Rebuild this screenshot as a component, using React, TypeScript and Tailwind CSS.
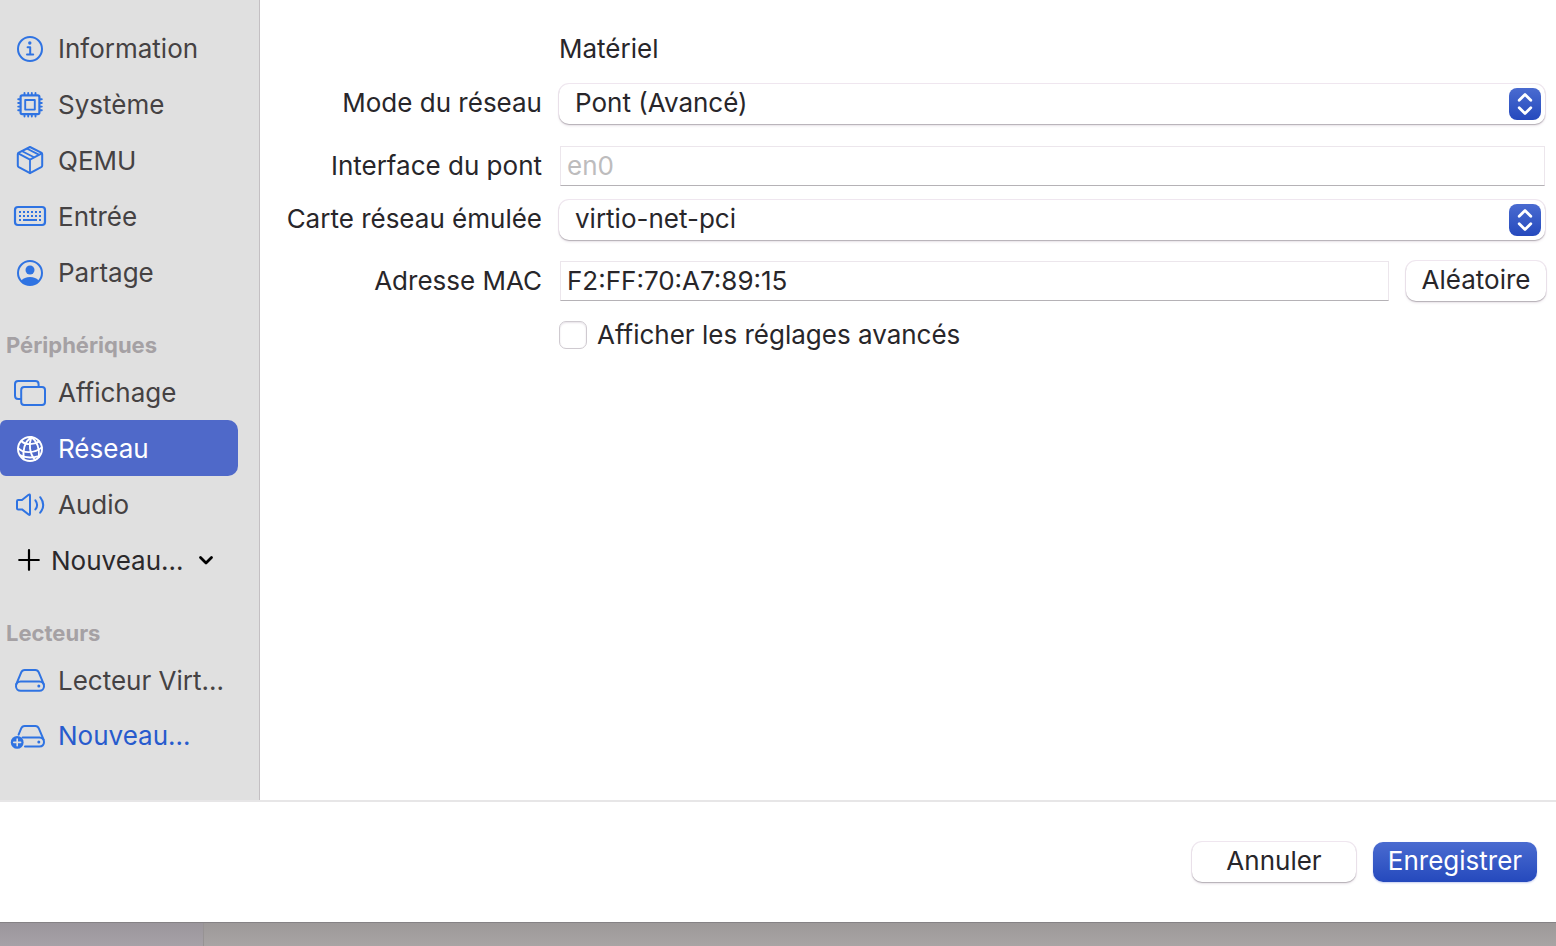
import { useState } from 'react';
import type { ReactNode } from 'react';

interface IconProps {
  children: ReactNode;
}

function Icon({ children }: IconProps) {
  return (
    <svg
      viewBox="0 0 32 32"
      className="w-8 h-8 flex-shrink-0 overflow-visible"
      fill="none"
      stroke="currentColor"
      strokeWidth="2"
      strokeLinecap="round"
      strokeLinejoin="round"
      aria-hidden="true"
    >
      {children}
    </svg>
  );
}

const InfoIcon = () => (
  <Icon>
    <circle cx="16" cy="17" r="12" />
    <circle cx="15.8" cy="11" r="1.7" fill="currentColor" stroke="none" />
    <path d="M13.6 15.2h2.6v7.2M13 22.6h6.2" />
  </Icon>
);

const ChipIcon = () => (
  <Icon>
    <rect x="6.6" y="7.4" width="18.8" height="18.8" rx="1.6" strokeWidth="2.2" />
    <rect x="11.2" y="12" width="9.6" height="9.6" strokeWidth="1.9" />
    <path
      d="M10.5 7V5M14.2 7V5M17.8 7V5M21.5 7V5M10.5 26.6v2M14.2 26.6v2M17.8 26.6v2M21.5 26.6v2M6.2 11.3h-2M6.2 15h-2M6.2 18.6h-2M6.2 22.3h-2M25.8 11.3h2M25.8 15h2M25.8 18.6h2M25.8 22.3h2"
      strokeWidth="1.9"
    />
  </Icon>
);

const BoxIcon = () => (
  <Icon>
    <path d="M16 3 27.2 8.6Q28.2 9.2 28.2 10.2V21.4Q28.2 22.6 27.2 23.2L16 29.2 4.8 23.2Q3.8 22.6 3.8 21.4V10.2Q3.8 9.2 4.8 8.6Z" />
    <path d="M4.2 9.4 16 15.6 27.8 9.4M16 15.6V29M8.2 7.2 20 13.2M13.2 4.8 24.8 10.6" strokeWidth="1.8" />
  </Icon>
);

const KeyboardIcon = () => (
  <Icon>
    <rect x="1" y="7" width="30" height="18" rx="3" strokeWidth="2.2" />
    <path d="M5 12h22M5 16h22" strokeDasharray="2 2" strokeLinecap="butt" />
    <path d="M5 20h2M9 20h14M25 20h2" strokeLinecap="butt" />
  </Icon>
);

const PersonIcon = () => (
  <Icon>
    <circle cx="16" cy="17" r="12" />
    <circle cx="16" cy="14" r="4.5" fill="currentColor" stroke="none" />
    <path d="M7.2 25C9 22 12.4 21 16 21s7 1 8.8 4C22.4 27.8 19.4 29 16 29s-6.4-1.2-8.8-4Z" fill="currentColor" stroke="none" />
  </Icon>
);

const WindowsIcon = () => (
  <Icon>
    <path d="M6.4 23H4.2Q1 23 1 19.8V8.2Q1 5 4.2 5H21.4Q24.6 5 24.6 8.2V10" />
    <rect x="7.2" y="11" width="23.8" height="18" rx="3" />
  </Icon>
);

const NetworkIcon = () => (
  <Icon>
    <g strokeWidth="1.9">
      <circle cx="16" cy="17" r="12" />
      <path d="M17 5C11.5 9.5 8.4 17 9.6 27.2M17.4 5C14.6 12 15.4 21.5 21 28M17.4 5C22.6 9 25.6 15 25 25" />
      <path d="M7.4 9.2C12 13.2 20 13 25.4 9.4M4.2 16.2C9 21.6 20.5 21.6 27.8 15.4M5.8 23.2C11 25.8 18.5 26 25 24.2" />
    </g>
  </Icon>
);

const SpeakerIcon = () => (
  <Icon>
    <path d="M3 13.2Q3 12 4.2 12H8L14.6 6.8Q16 5.8 16 7.4V26Q16 27.6 14.6 26.5L8 21.4H4.2Q3 21.4 3 20.2Z" />
    <path d="M21.4 12.3Q24.8 17 21.4 21.4M26.2 9.2Q32.2 17 26.2 24.6" />
  </Icon>
);

const DriveIcon = () => (
  <Icon>
    <path d="M2.2 20.3 7.2 8.4Q8.2 6 10.6 6H21.4Q23.8 6 24.8 8.4L29.8 20.3" />
    <rect x="2" y="17.4" width="28" height="9.4" rx="4.6" />
    <circle cx="24.8" cy="22" r="1.5" fill="currentColor" stroke="none" />
  </Icon>
);

const DriveAddIcon = () => (
  <Icon>
    <path d="M4.6 14.6 7.2 8.4Q8.2 6 10.6 6H21.4Q23.8 6 24.8 8.4L29.6 19.6" />
    <path d="M8.6 17.4H25.4Q30 17.6 30 22T25.4 26.6H11" />
    <circle cx="24.8" cy="22" r="1.5" fill="currentColor" stroke="none" />
    <circle cx="3.2" cy="22.4" r="6.4" fill="currentColor" stroke="none" />
    <path d="M-.2 22.4h6.8M3.2 19v6.8" stroke="#e0e0e0" strokeWidth="1.6" />
  </Icon>
);

interface NavItem {
  id: string;
  label: string;
  icon: ReactNode;
}

const GENERAL: NavItem[] = [
  { id: 'info',    label: 'Information', icon: <InfoIcon /> },
  { id: 'system',  label: 'Système',     icon: <ChipIcon /> },
  { id: 'qemu',    label: 'QEMU',        icon: <BoxIcon /> },
  { id: 'input',   label: 'Entrée',      icon: <KeyboardIcon /> },
  { id: 'sharing', label: 'Partage',     icon: <PersonIcon /> },
];

const DEVICES: NavItem[] = [
  { id: 'display', label: 'Affichage', icon: <WindowsIcon /> },
  { id: 'network', label: 'Réseau',    icon: <NetworkIcon /> },
  { id: 'sound',   label: 'Audio',     icon: <SpeakerIcon /> },
];

const DRIVES: NavItem[] = [
  { id: 'drive0', label: 'Lecteur Virt...', icon: <DriveIcon /> },
];

interface NavListProps {
  items: NavItem[];
  active: string;
  onSelect: (id: string) => void;
}

function NavList({ items, active, onSelect }: NavListProps) {
  return (
    <>
      {items.map((item) => (
        <button
          key={item.id}
          onClick={() => onSelect(item.id)}
          className={
            item.id === active
              ? 'flex h-14 w-full items-center gap-3 rounded-l-md rounded-r-[10px] bg-[#4f69c9] pl-3.5 text-white'
              : 'flex h-14 w-full items-center gap-3 pl-3.5 text-[#454243]'
          }
        >
          <span className={item.id === active ? 'text-white' : 'text-[#2f73e2]'}>{item.icon}</span>
          <span className="whitespace-nowrap pt-0.5">{item.label}</span>
        </button>
      ))}
    </>
  );
}

interface PopupSelectProps {
  id: string;
  options: string[];
}

function PopupSelect({ id, options }: PopupSelectProps) {
  return (
    <div className="relative px-px">
      <select
        id={id}
        className="block h-10 w-full appearance-none rounded-[10px] bg-white pb-0.5 pl-4 pr-12
                   shadow-[0_1px_1px_0_#b4b0b5,0_0_0_1px_#efe6ef,0_2px_3px_0_#ece8ec] outline-none"
      >
        {options.map((o) => (
          <option key={o}>{o}</option>
        ))}
      </select>
      <span
        className="pointer-events-none absolute right-[5px] top-1 flex h-8 w-8 items-center justify-center
                   rounded-lg bg-linear-to-b from-[#4a6bd0] to-[#2549bd] text-white"
      >
        <svg viewBox="0 0 32 32" className="h-8 w-8" fill="none" stroke="currentColor" strokeWidth="2.8" strokeLinecap="round" strokeLinejoin="round" aria-hidden="true">
          <path d="m10.2 12.2 5.8-5.7 5.8 5.7M10.2 19.8l5.8 5.7 5.8-5.7" />
        </svg>
      </span>
    </div>
  );
}

const INPUT =
  'block h-10 min-w-0 flex-1 border border-[#ece6ec] border-b-[#b5b2b6] bg-white px-1.5 pb-0.5 outline-none placeholder:text-[#bdbcbd]';

const BUTTON =
  'h-10 rounded-[10px] bg-white pb-0.5 text-center shadow-[0_1px_1px_0_#b4b0b5,0_0_0_1px_#efe6ef,0_2px_3px_0_#ece8ec]';

export default function App() {
  const [active, setActive] = useState('network');
  const [mac, setMac] = useState('F2:FF:70:A7:89:15');
  const [advanced, setAdvanced] = useState(false);

  const randomize = () => {
    const bytes = Array.from({ length: 6 }, () => Math.floor(Math.random() * 256));
    // Locally administered, unicast
    bytes[0] = (bytes[0] & 0xfc) | 0x02;
    setMac(bytes.map((b) => b.toString(16).padStart(2, '0').toUpperCase()).join(':'));
  };

  return (
    <div className="flex min-h-screen flex-col bg-white font-['Inter',sans-serif] text-[26px] leading-8 text-[#28262a]">
      <div className="flex flex-1">
        {/* Sidebar */}
        <nav className="w-[260px] flex-shrink-0 border-r border-[#c4c0c3] bg-[#e0e0e0] pb-9 pr-[21px] pt-5">
          <NavList items={GENERAL} active={active} onSelect={setActive} />

          <h2 className="mt-6 flex h-10 items-center pl-1.5 pt-0.5 text-[22px] font-bold text-[#a5a1a4]">Périphériques</h2>
          <NavList items={DEVICES} active={active} onSelect={setActive} />
          <button className="flex h-14 w-full items-center pl-[18px] text-[#2b292b]">
            <svg viewBox="0 0 22 22" className="h-[22px] w-[22px]" fill="none" stroke="#000" strokeWidth="2.2" strokeLinecap="round" aria-hidden="true">
              <path d="M11 1.2v19.6M1.2 11h19.6" />
            </svg>
            <span className="ml-[11px] pt-0.5">Nouveau...</span>
            <svg viewBox="0 0 16 16" className="ml-auto mr-6 h-4 w-4" fill="none" stroke="#000" strokeWidth="2.8" strokeLinecap="round" strokeLinejoin="round" aria-hidden="true">
              <path d="m2.5 5.5 5.5 5.5 5.5-5.5" />
            </svg>
          </button>

          <h2 className="mt-6 flex h-10 items-center pl-1.5 pt-0.5 text-[22px] font-bold text-[#a5a1a4]">Lecteurs</h2>
          <NavList items={DRIVES} active={active} onSelect={setActive} />
          <button className="flex h-14 w-full items-center gap-3 pl-3.5 text-[#275bcd]">
            <span className="text-[#2f73e2]"><DriveAddIcon /></span>
            <span>Nouveau...</span>
          </button>
        </nav>

        {/* Network settings */}
        <main className="min-w-0 flex-1 pl-[26px] pr-2.5 pt-[33px]">
          <div className="grid grid-cols-[256px_minmax(0,1fr)] items-center gap-x-4">
            <h1 className="col-start-2 pl-px">Matériel</h1>

            <label htmlFor="mode" className="mt-[19px] whitespace-nowrap pb-0.5 text-right">Mode du réseau</label>
            <div className="mt-[19px]">
              <PopupSelect id="mode" options={['Pont (Avancé)', 'Réseau partagé', 'Hôte uniquement']} />
            </div>

            <label htmlFor="bridge" className="mt-[22px] whitespace-nowrap text-right">Interface du pont</label>
            <div className="mt-[22px] flex pl-0.5 pr-px">
              <input id="bridge" type="text" placeholder="en0" className={INPUT} />
            </div>

            <label htmlFor="card" className="mt-3.5 whitespace-nowrap pb-0.5 text-right">Carte réseau émulée</label>
            <div className="mt-3.5">
              <PopupSelect id="card" options={['virtio-net-pci', 'e1000', 'rtl8139']} />
            </div>

            <label htmlFor="mac" className="mt-[21px] whitespace-nowrap text-right">Adresse MAC</label>
            <div className="mt-[21px] flex gap-[17px] pl-0.5">
              <input id="mac" type="text" value={mac} onChange={(e) => setMac(e.target.value)} className={INPUT} />
              <button onClick={randomize} className={`w-[140px] ${BUTTON}`}>Aléatoire</button>
            </div>

            <div className="col-start-2 mt-[18px] flex items-center gap-2.5">
              <input
                id="advanced"
                type="checkbox"
                checked={advanced}
                onChange={(e) => setAdvanced(e.target.checked)}
                className="ml-px h-7 w-7 appearance-none rounded-[7px] border border-[#cfcad0] bg-white
                           shadow-[inset_0_1px_2px_#e6e1e7] checked:bg-[#2f5bd0]"
              />
              <label htmlFor="advanced">Afficher les réglages avancés</label>
            </div>
          </div>
        </main>
      </div>

      {/* Actions */}
      <footer className="flex h-[122px] items-center justify-end gap-[17px] border-t-2 border-[#e7e6e7] pr-[19px]">
        <button className={`w-[164px] ${BUTTON}`}>Annuler</button>
        <button className="h-10 w-[164px] rounded-[10px] bg-linear-to-b from-[#4a6bd0] to-[#2549bd] pb-0.5 text-center text-white shadow-[0_1px_2px_#c5cdf0]">
          Enregistrer
        </button>
      </footer>

      {/* Window behind the sheet */}
      <div className="flex h-6 border-t border-[#858285]">
        <div className="w-[204px] border-r border-[#979394] bg-linear-to-b from-[#9b969c] to-[#a6a1a7]" />
        <div className="flex-1 bg-linear-to-b from-[#9d9999] to-[#a8a4a4]" />
      </div>
    </div>
  );
}
